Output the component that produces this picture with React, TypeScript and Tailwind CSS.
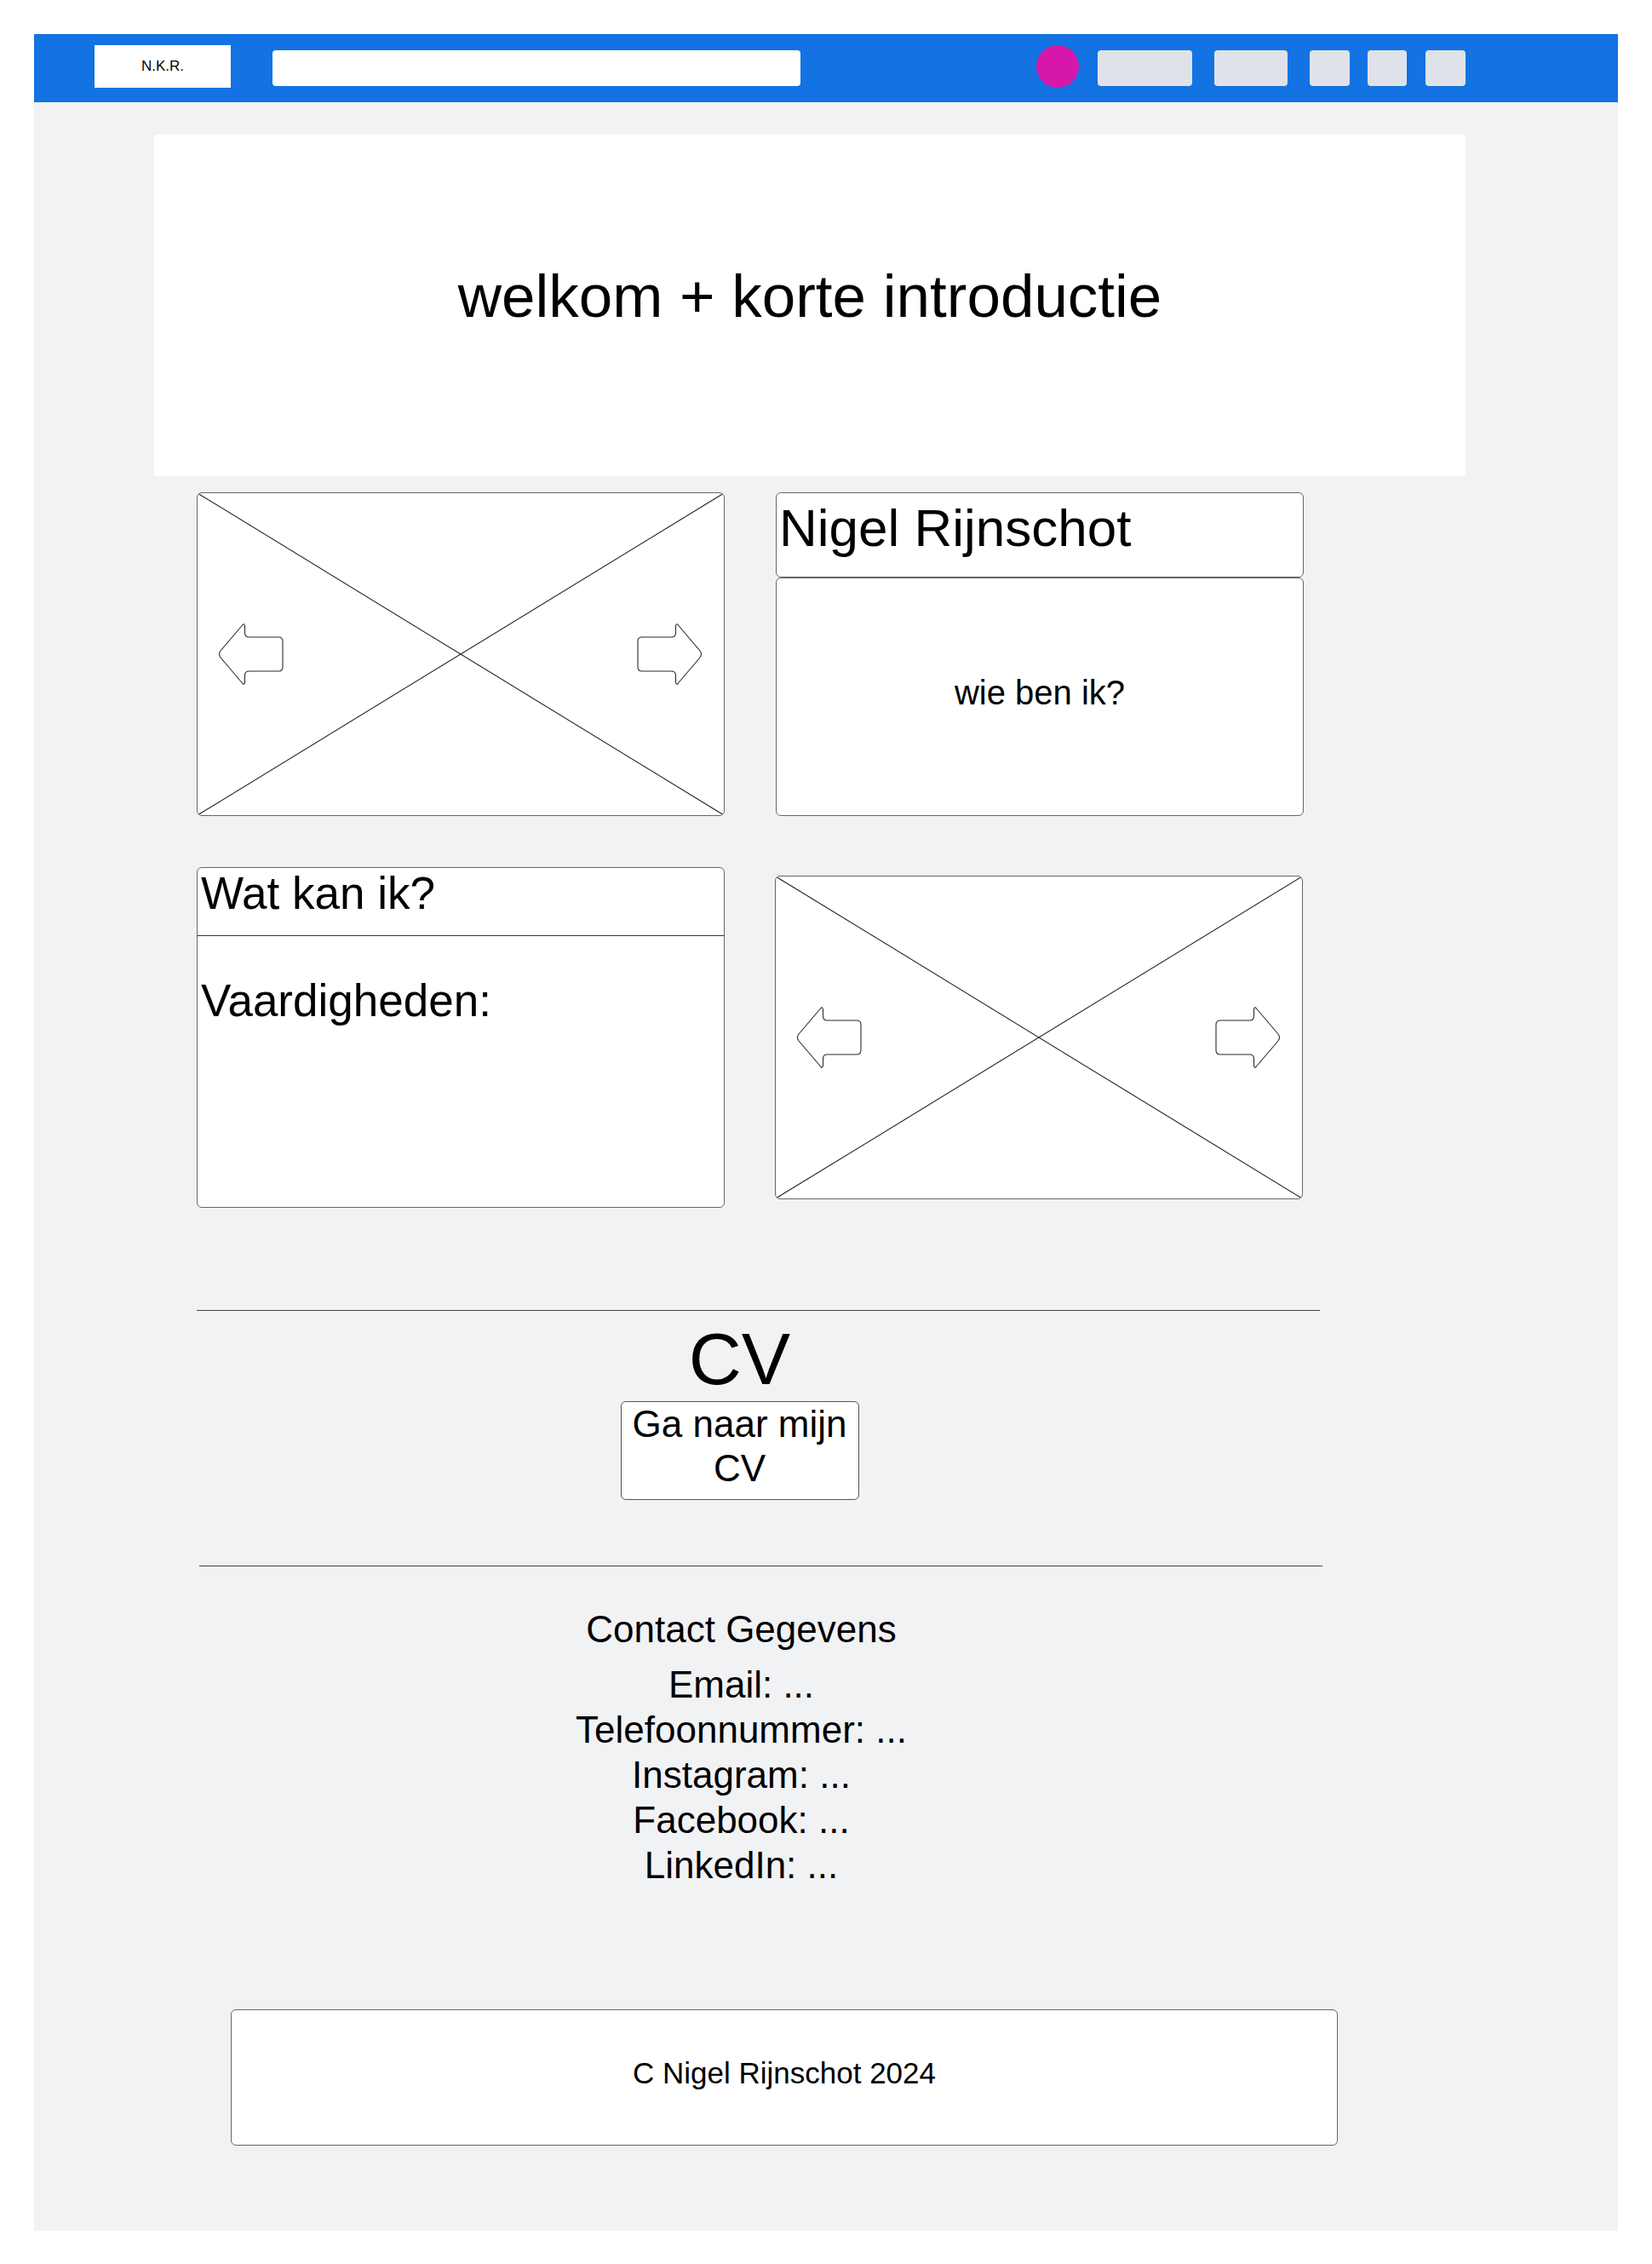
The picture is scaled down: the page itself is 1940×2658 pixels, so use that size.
import React from 'react';

const Arrow = ({ flip = false }: { flip?: boolean }) => (
  <svg
    width="78"
    height="74"
    viewBox="0 0 78 74"
    className={flip ? 'absolute right-[24px] top-1/2 -translate-y-1/2 -scale-x-100' : 'absolute left-[23px] top-1/2 -translate-y-1/2'}
  >
    <path
      d="M4 33 L30 2.5 Q32 0.5 32.5 4 L32.5 12 Q32.5 17 37.5 17 L72 17 Q77 17 77 22 L77 52 Q77 57 72 57 L37.5 57 Q32.5 57 32.5 62 L32.5 70 Q32 73.5 30 71.5 L4 41 Q1 37 4 33 Z"
      fill="white"
      stroke="#2a2a2a"
      strokeWidth="1.1"
    />
  </svg>
);

const ImageCard = ({ className = '' }: { className?: string }) => (
  <div className={`relative h-[380px] w-[620px] overflow-hidden rounded-[6px] border border-[#666] bg-white ${className}`}>
    <svg className="absolute inset-0 h-full w-full" viewBox="0 0 100 100" preserveAspectRatio="none">
      <line x1="0" y1="0" x2="100" y2="100" stroke="#222" strokeWidth="1.1" vectorEffect="non-scaling-stroke" />
      <line x1="100" y1="0" x2="0" y2="100" stroke="#222" strokeWidth="1.1" vectorEffect="non-scaling-stroke" />
    </svg>
    <Arrow />
    <Arrow flip />
  </div>
);

const contacts = ['Email: ...', 'Telefoonnummer: ...', 'Instagram: ...', 'Facebook: ...', 'LinkedIn: ...'];

export default function App() {
  return (
    <div className="min-h-screen bg-white pt-10 pl-10 font-['Liberation_Sans',Arial,sans-serif] text-black">
      <div className="w-[1860px] bg-[#f1f2f4] pb-[100px]">
        {/* top bar */}
        <header className="flex h-20 items-center bg-[#1373e3] pl-[71px]">
          <div className="mb-1 flex h-[50px] w-[160px] items-center justify-center bg-white text-[17px]">N.K.R.</div>
          <div className="ml-[49px] h-[42px] w-[620px] rounded-[4px] bg-white" />
          <div className="mb-1 ml-[277px] h-[50px] w-[50px] rounded-full bg-[#d717aa]" />
          <div className="ml-[22px] h-[42px] w-[111px] rounded-[4px] bg-[#dfe2e8]" />
          <div className="ml-[26px] h-[42px] w-[86px] rounded-[4px] bg-[#dfe2e8]" />
          <div className="ml-[26px] h-[42px] w-[47px] rounded-[4px] bg-[#dfe2e8]" />
          <div className="ml-[21px] h-[42px] w-[46px] rounded-[4px] bg-[#dfe2e8]" />
          <div className="ml-[22px] h-[42px] w-[47px] rounded-[4px] bg-[#dfe2e8]" />
        </header>

        {/* hero */}
        <section className="ml-[141px] mt-[38px] flex h-[401px] w-[1540px] items-center justify-center bg-white pb-[22px]">
          <h1 className="text-[71px] leading-[82px]">welkom + korte introductie</h1>
        </section>

        {/* cards */}
        <div className="ml-[191px] mt-[19px] grid grid-cols-[620px_620px] gap-x-[60px] gap-y-[60px] items-start">
          <ImageCard />

          <div className="flex flex-col">
            <div className="h-[100px] rounded-[6px] border border-[#666] bg-white pl-[3px] pt-[6px]">
              <h2 className="text-[62px] leading-[70px]">Nigel Rijnschot</h2>
            </div>
            <div className="flex h-[280px] items-center justify-center rounded-[6px] border border-[#666] bg-white pb-[10px]">
              <p className="text-[40px] leading-[46px]">wie ben ik?</p>
            </div>
          </div>

          <div className="h-[400px] rounded-[6px] border border-[#666] bg-white">
            <div className="h-[80px] border-b border-[#333] pl-[4px]">
              <h2 className="text-[53px] leading-[60px]">Wat kan ik?</h2>
            </div>
            <p className="mt-[46px] pl-[4px] text-[53px] leading-[60px]">Vaardigheden:</p>
          </div>

          <ImageCard className="-ml-px mt-[10px]" />
        </div>

        {/* CV */}
        <div className="ml-[191px] mt-[120px] h-px w-[1319px] bg-[#444]" />
        <section className="ml-[189px] flex w-[1279px] flex-col items-center">
          <h2 className="mt-[7px] text-[86px] leading-[99px]">CV</h2>
          <button className="h-[116px] w-[280px] rounded-[6px] border border-[#555] bg-white pb-[12px] text-center text-[44px] leading-[52px]">
            Ga naar mijn CV
          </button>
        </section>

        {/* contact */}
        <div className="ml-[194px] mt-[77px] h-px w-[1319px] bg-[#444]" />
        <section className="ml-[191px] flex w-[1279px] flex-col items-center text-center">
          <h3 className="mt-[47px] text-[44px] leading-[53px]">Contact Gegevens</h3>
          <ul className="mt-[12px]">
            {contacts.map((c) => (
              <li key={c} className="text-[44px] leading-[53px]">{c}</li>
            ))}
          </ul>
        </section>

        {/* footer */}
        <footer className="ml-[231px] mt-[143px] flex h-[160px] w-[1300px] items-center justify-center rounded-[6px] border border-[#666] bg-white pb-[10px]">
          <p className="text-[35px] leading-[40px]">C Nigel Rijnschot 2024</p>
        </footer>
      </div>
    </div>
  );
}
